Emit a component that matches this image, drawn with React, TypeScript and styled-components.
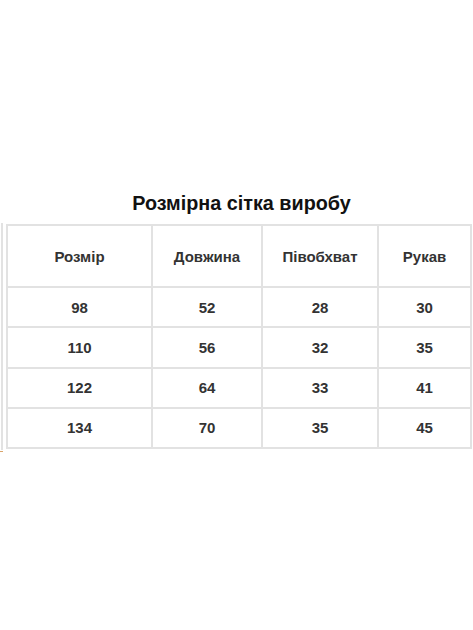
import React from "react";
import styled, { createGlobalStyle } from "styled-components";

const Global = createGlobalStyle`
  html, body { margin: 0; padding: 0; background: #ffffff; }
  body { font-family: "Liberation Sans", Arial, sans-serif; }
`;

const Page = styled.div`
  width: 473px;
  height: 630px;
  padding-top: 191px;
  box-sizing: border-box;
  position: relative;
`;

const Title = styled.h2`
  margin: 0 0 8px;
  padding-left: 10px;
  text-align: center;
  font-size: 19.8px;
  line-height: 24px;
  font-weight: 700;
  color: #111111;
`;

const Frame = styled.div`
  margin-left: 1px;
  border-left: 2px solid #e2e2e2;
  padding: 1px 0 1px 2px;
  width: 468px;
  box-sizing: border-box;
`;

const Table = styled.table`
  border-collapse: collapse;
  width: 464px;
  margin-left: 1px;
  table-layout: fixed;
`;

const Cell = styled.td<{ $head?: boolean }>`
  border: 2px solid #e2e2e2;
  height: ${(p) => (p.$head ? 60 : 38.25)}px;
  padding: 0;
  text-align: center;
  vertical-align: middle;
  font-size: 15px;
  font-weight: 700;
  color: #333333;
`;

const Mark = styled.div`
  position: absolute;
  left: 0;
  top: 451px;
  width: 3px;
  height: 1px;
  background: #d9a46a;
`;

const widths = [145, 110, 116, 93];
const head = ["Розмір", "Довжина", "Півобхват", "Рукав"];
const rows = [
  ["98", "52", "28", "30"],
  ["110", "56", "32", "35"],
  ["122", "64", "33", "41"],
  ["134", "70", "35", "45"],
];

export default function App() {
  return (
    <Page>
      <Global />
      <Title>Розмірна сітка виробу</Title>
      <Frame>
        <Table>
          <colgroup>
            {widths.map((w, i) => (
              <col key={i} style={{ width: w }} />
            ))}
          </colgroup>
          <tbody>
            <tr>
              {head.map((h) => (
                <Cell as="th" $head key={h}>
                  {h}
                </Cell>
              ))}
            </tr>
            {rows.map((r, i) => (
              <tr key={i}>
                {r.map((c, j) => (
                  <Cell key={j}>{c}</Cell>
                ))}
              </tr>
            ))}
          </tbody>
        </Table>
      </Frame>
      <Mark />
    </Page>
  );
}
